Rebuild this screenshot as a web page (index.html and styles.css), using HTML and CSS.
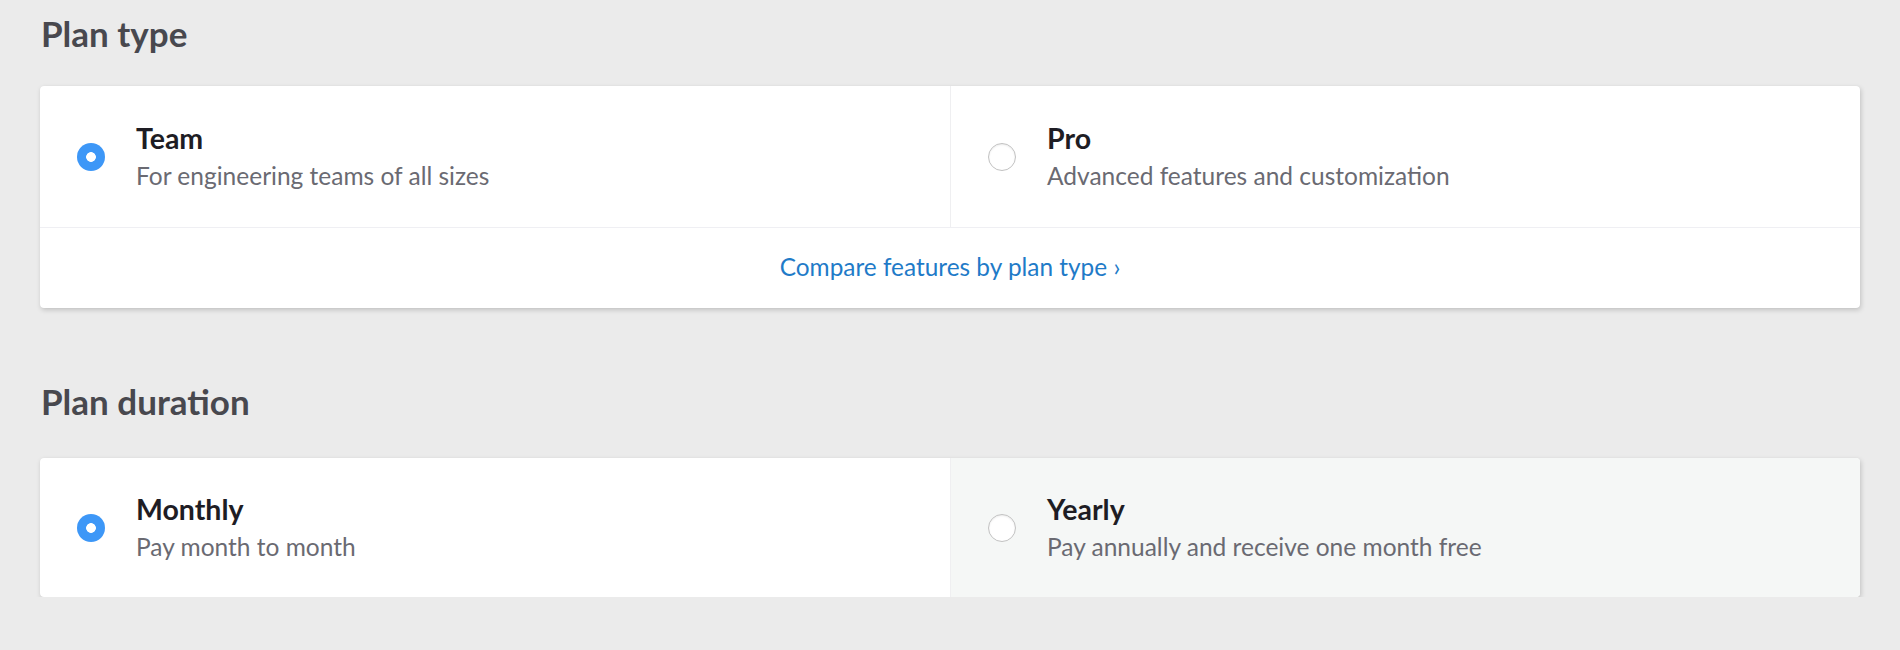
FILE: index.html
```html
<!DOCTYPE html>
<html lang="en">
<head>
<meta charset="utf-8">
<title>Plan settings</title>
<link rel="stylesheet" href="styles.css">
</head>
<body>
<main class="page">
  <section class="section">
    <h2 class="section-title">Plan type</h2>
    <div class="card">
      <div class="options options--type">
        <label class="option">
          <span class="radio radio--checked"></span>
          <span class="option-text">
            <span class="option-title">Team</span>
            <span class="option-desc">For engineering teams of all sizes</span>
          </span>
        </label>
        <label class="option option--divided">
          <span class="radio"></span>
          <span class="option-text">
            <span class="option-title">Pro</span>
            <span class="option-desc">Advanced features and customization</span>
          </span>
        </label>
      </div>
      <div class="card-footer">
        <a class="compare-link" href="#">Compare features by plan type ›</a>
      </div>
    </div>
  </section>

  <section class="section">
    <h2 class="section-title section-title--spaced">Plan duration</h2>
    <div class="card">
      <div class="options options--duration">
        <label class="option">
          <span class="radio radio--checked"></span>
          <span class="option-text">
            <span class="option-title">Monthly</span>
            <span class="option-desc">Pay month to month</span>
          </span>
        </label>
        <label class="option option--divided option--muted">
          <span class="radio"></span>
          <span class="option-text">
            <span class="option-title">Yearly</span>
            <span class="option-desc">Pay annually and receive one month free</span>
          </span>
        </label>
      </div>
    </div>
  </section>
</main>
</body>
</html>
```

FILE: styles.css
```css
* {
  box-sizing: border-box;
}

html, body {
  margin: 0;
  padding: 0;
  background: #ebebeb;
}

body {
  font-family: Lato, "Open Sans", "Liberation Sans", sans-serif;
  color: #1e1d24;
}

.page {
  padding: 12px 40px 0;
  display: flex;
  flex-direction: column;
  gap: 72px;
}

.section-title {
  margin: 0 0 32px;
  font-size: 35px;
  line-height: 42px;
  font-weight: 700;
  color: #48484e;
  padding-left: 1px;
}

.section-title--spaced {
  margin-bottom: 36px;
}

.card {
  background: #ffffff;
  border-radius: 4px;
  box-shadow: 1px 2px 5px rgba(0, 0, 0, 0.18), 0 0 1px rgba(0, 0, 0, 0.06);
  overflow: hidden;
}

.options {
  display: grid;
  grid-template-columns: 1fr 1fr;
}

.options--type {
  border-bottom: 1px solid #efeff3;
}

.option {
  display: flex;
  align-items: center;
  gap: 31px;
  padding: 36px 0 36px 37px;
  cursor: pointer;
}

.options--duration .option {
  padding-top: 35px;
  padding-bottom: 35px;
}

.option--divided {
  border-left: 1px solid #efeff1;
  padding-left: 37px;
}

.option--muted {
  background: #f5f7f6;
}

.radio {
  flex: 0 0 auto;
  width: 28px;
  height: 28px;
  border-radius: 50%;
  background: #ffffff;
  border: 1px solid #c2c2c2;
  box-shadow: inset 0 1px 2px rgba(0, 0, 0, 0.08);
}

.radio--checked {
  border: none;
  box-shadow: none;
  background: radial-gradient(circle, #ffffff 0 4.5px, #3d97f7 5.2px);
}

.option-text {
  display: flex;
  flex-direction: column;
  gap: 7px;
}

.option-title {
  font-size: 28.5px;
  line-height: 32px;
  font-weight: 700;
  color: #1e1d24;
}

.option-desc {
  font-size: 24.5px;
  line-height: 30px;
  font-weight: 400;
  color: #6a6a72;
}

.card-footer {
  display: flex;
  justify-content: center;
  padding: 24px 0 26px;
}

.compare-link {
  font-size: 24.4px;
  line-height: 30px;
  color: #1f7bc8;
  text-decoration: none;
}
```
